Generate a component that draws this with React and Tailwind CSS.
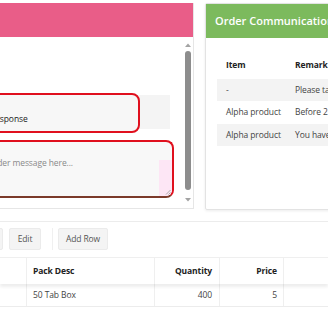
import React from "react";

export default function App() {
  return (
    <div
      className="relative w-[328px] h-[320px] overflow-hidden bg-white text-[8.5px] tracking-[-0.1px] text-[#333]"
      style={{ fontFamily: '"Open Sans", "Noto Sans", sans-serif' }}
    >
      {/* Top section */}
      <div className="flex items-start pt-[3px] h-[222px] border-b border-[#ececec]">
        {/* Left panel */}
        <div className="w-[194px] shrink-0 h-[206px] flex flex-col border-r border-b border-[#e6e6e6]">
          <div className="h-[34px] bg-[#e95d88]" />
          <div className="flex flex-1 min-h-0">
            <div className="flex-1 min-w-0 pt-[58px] flex flex-col">
              <div className="ml-[-20px] w-[190px] h-[34px] bg-[#f4f4f4] flex items-start">
                <div className="-mt-[2px] w-[160px] h-[40px] shrink-0 border-2 border-[#e0101e] rounded-[8px] bg-[#f7f7f7] flex items-end pb-[5px] pl-[8px] text-[8.5px] text-[#222]">
                  Response
                </div>
              </div>
              <div className="mt-[11px] ml-[-20px] w-[194px] h-[58px] border-2 border-[#e0101e] border-b-[#7b3a2a] rounded-[8px] bg-[#f8f8f8] flex overflow-hidden">
                <div className="flex-1 pt-[15px] text-[8.5px] text-[#8a8a8a] whitespace-nowrap overflow-hidden">
                  <span className="ml-[-16px] block">Enter order message here...</span>
                </div>
                <div className="w-[13px] mt-[18px] bg-[#fde6f5] relative">
                  <svg className="absolute right-[1px] bottom-[1px]" width="6" height="6" viewBox="0 0 6 6">
                    <path d="M1 5.5L5.5 1M3.5 5.5L5.5 3.5" stroke="#999" strokeWidth="0.8" />
                  </svg>
                </div>
              </div>
            </div>
            {/* scrollbar */}
            <div className="w-[10px] shrink-0 flex flex-col items-center pt-[6px] pb-[6px]">
              <svg width="6" height="4" viewBox="0 0 6 4">
                <path d="M0 4L3 0.5L6 4Z" fill="#a3a3a3" />
              </svg>
              <div className="mt-[4px] w-[6px] flex-1 rounded-full bg-[#8d8d8d] mb-[8px]" />
              <svg width="6" height="4" viewBox="0 0 6 4">
                <path d="M0 0L3 3.5L6 0Z" fill="#a3a3a3" />
              </svg>
            </div>
          </div>
        </div>

        {/* Right panel */}
        <div className="ml-[11px] w-[150px] shrink-0 h-[207px] flex flex-col border border-[#e3e3e3] rounded-[2px] shadow-[0_1px_3px_rgba(0,0,0,0.08)]">
          <div className="h-[34px] bg-[#7cba5d] flex items-center pl-[9px] text-white text-[11px] tracking-normal font-semibold whitespace-nowrap overflow-hidden">
            Order Communication
          </div>
          <div className="px-[11px] pt-[13px]">
            <div className="flex h-[28px] items-center font-bold text-[#222]">
              <div className="w-[69px] shrink-0 pl-[9px]">Item</div>
              <div className="pl-[9px] whitespace-nowrap">Remark</div>
            </div>
            <div className="flex h-[22px] items-center bg-[#f3f3f3] text-[#444] whitespace-nowrap">
              <div className="w-[69px] shrink-0 pl-[9px]">-</div>
              <div className="pl-[9px]">Please take care</div>
            </div>
            <div className="flex h-[23px] items-center text-[#444] whitespace-nowrap">
              <div className="w-[69px] shrink-0 pl-[9px]">Alpha product</div>
              <div className="pl-[9px]">Before 2 days</div>
            </div>
            <div className="flex h-[22px] items-center bg-[#f3f3f3] text-[#444] whitespace-nowrap">
              <div className="w-[69px] shrink-0 pl-[9px]">Alpha product</div>
              <div className="pl-[9px]">You have</div>
            </div>
          </div>
        </div>
      </div>

      {/* Toolbar */}
      <div className="flex items-center pt-[6px] h-[28px]">
        <div className="ml-[-30px] w-[33px] h-[22px] bg-[#f4f4f4] border border-[#ebebeb] rounded-[2px]" />
        <div className="ml-[6px] w-[32px] h-[22px] bg-[#f4f4f4] border border-[#ebebeb] rounded-[2px] flex items-center justify-center text-[#555]">
          Edit
        </div>
        <div className="ml-[11px] w-px h-[22px] bg-[#f0f0f0]" />
        <div className="ml-[5px] w-[50px] h-[22px] bg-[#f4f4f4] border border-[#ebebeb] rounded-[2px] flex items-center justify-center text-[#555]">
          Add Row
        </div>
      </div>

      {/* Table */}
      <div className="mt-[7px]">
        <div className="flex h-[27px] border-t border-[#efefef] font-bold text-[#222] shadow-[0_3px_3px_rgba(0,0,0,0.07)] relative">
          <div className="w-[27px] border-r border-[#efefef]" />
          <div className="w-[128px] border-r border-[#efefef] flex items-center pl-[6px]">Pack Desc</div>
          <div className="w-[65px] border-r border-[#efefef] flex items-center justify-end pr-[7px]">Quantity</div>
          <div className="w-[64px] border-r border-[#efefef] flex items-center justify-end pr-[6px]">Price</div>
          <div className="flex-1" />
        </div>
        <div className="flex h-[23px] border-b border-[#ececec] text-[#444]">
          <div className="w-[27px] border-r border-[#efefef]" />
          <div className="w-[128px] border-r border-[#efefef] flex items-center pl-[6px]">50 Tab Box</div>
          <div className="w-[65px] border-r border-[#efefef] flex items-center justify-end pr-[7px]">400</div>
          <div className="w-[64px] border-r border-[#efefef] flex items-center justify-end pr-[6px]">5</div>
          <div className="flex-1" />
        </div>
      </div>
    </div>
  );
}
